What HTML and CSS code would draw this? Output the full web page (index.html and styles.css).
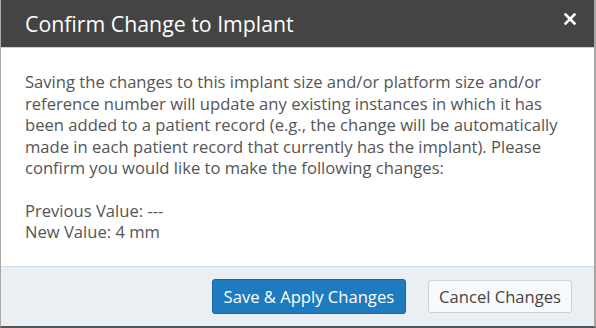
FILE: index.html
```html
<!DOCTYPE html>
<html lang="en">
<head>
    <meta charset="UTF-8">
    <title>Confirm Change to Implant</title>
    <link rel="stylesheet" href="styles.css">
</head>
<body>
    <div class="dialog">
        <div class="dialog-header">
            <span class="dialog-title">Confirm Change to Implant</span>
            <button class="close" aria-label="Close">
                <svg width="12" height="12" viewBox="0 0 12 12">
                    <path d="M1.5 1.5 L10.5 10.5 M10.5 1.5 L1.5 10.5" stroke="#fff" stroke-width="2.6" stroke-linecap="square"/>
                </svg>
            </button>
        </div>
        <div class="dialog-body">
            <p>Saving the changes to this implant size and/or platform size and/or reference number will update any existing instances in which it has been added to a patient record (e.g., the change will be automatically made in each patient record that currently has the implant). Please confirm you would like to make the following changes:</p>
            <p>Previous Value: ---<br>New Value: 4 mm</p>
        </div>
        <div class="dialog-footer">
            <button class="btn btn-primary">Save &amp; Apply Changes</button>
            <button class="btn btn-default">Cancel Changes</button>
        </div>
    </div>
</body>
</html>
```

FILE: styles.css
```css
body {
    margin: 0;
    font-family: 'Open Sans', 'Liberation Sans', sans-serif;
    background: #fff;
}
.dialog {
    width: 596px;
    height: 328px;
    box-sizing: border-box;
    border-left: 1px solid #a8a8a8;
    border-right: 2px solid #a8a8a8;
    border-bottom: 2px solid #555;
    display: flex;
    flex-direction: column;
    background: #fff;
}
.dialog-header {
    height: 47px;
    background: #444;
    border-bottom: 1px solid #cfcfcf;
    display: flex;
    align-items: center;
    justify-content: space-between;
    padding: 0 18px 0 24px;
}
.dialog-title {
    color: #fff;
    font-size: 21.3px;
    margin-top: -1px;
}
.close {
    background: none;
    border: none;
    padding: 0;
    width: 12px;
    height: 12px;
    margin-top: -9px;
    cursor: pointer;
    display: flex;
}
.dialog-body {
    flex: 1;
    padding: 23px 20px 0 24px;
    color: #555;
    font-size: 16.6px;
    line-height: 21.5px;
}
.dialog-body p {
    margin: 0 0 21px 0;
}
.dialog-footer {
    height: 59px;
    background: #e9eff3;
    border-top: 1px solid #d6dde2;
    display: flex;
    align-items: center;
    justify-content: flex-end;
    gap: 22px;
    padding: 0 22px 0 0;
}
.btn {
    font-family: 'Open Sans', 'Liberation Sans', sans-serif;
    font-size: 16.6px;
    height: 35px;
    border-radius: 3px;
    padding: 0 11px;
    cursor: pointer;
}
.btn-primary {
    background: #1f7bc0;
    border: 1px solid #1766a3;
    color: #fff;
}
.btn-default {
    background: #f8f9fa;
    border: 1px solid #ccd2d6;
    color: #444;
    height: 33px;
    padding: 0 10px;
}
```
